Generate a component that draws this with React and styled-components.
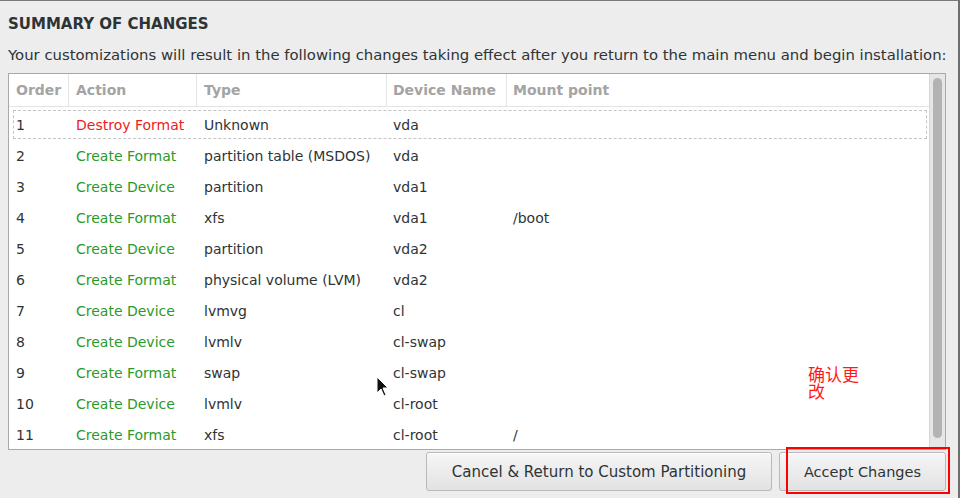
import styled, { createGlobalStyle } from "styled-components";

const Global = createGlobalStyle`
  html, body { margin: 0; padding: 0; background: #ededed; }
  body { font-family: "DejaVu Sans", "Noto Sans CJK SC", sans-serif; color: #2e3436; }
`;

const Window = styled.div`
  position: relative;
  width: 960px;
  height: 498px;
  box-sizing: border-box;
  background: #ededed;
  border-top: 1px solid #7a7a7a;
  border-right: 2px solid #6e6e6e;
  padding: 0 12px 0 8px;
  display: flex;
  flex-direction: column;
  overflow: hidden;
`;

const Title = styled.h1`
  margin: 14px 0 0 0;
  font-size: 15px;
  font-weight: bold;
  line-height: 18px;
`;

const Intro = styled.p`
  margin: 13px 0 0 0;
  font-size: 14.85px;
  line-height: 18px;
  white-space: nowrap;
`;

const Frame = styled.div`
  margin-top: 9px;
  width: 938px;
  height: 377px;
  flex-shrink: 0;
  box-sizing: border-box;
  border: 1px solid #a9a9a9;
  background: #fff;
  display: flex;
  overflow: hidden;
`;

const Table = styled.div`
  flex: 1;
  display: grid;
  grid-template-columns: 60px 128px 190px 120px 1fr;
  grid-template-rows: 35px;
  grid-auto-rows: 31px;
  align-content: start;
`;

const HeadCell = styled.div`
  height: 33px;
  box-sizing: border-box;
  padding-left: ${p => p.$pad}px;
  border-right: ${p => (p.$last ? "none" : "1px solid #e4e4e4")};
  border-bottom: 1px solid #e4e4e4;
  display: flex;
  align-items: center;
  font-size: 14px;
  font-weight: bold;
  color: #a4a4a4;
`;

const Row = styled.div`
  position: relative;
  grid-column: 1 / -1;
  display: grid;
  grid-template-columns: subgrid;

  &::before {
    content: "";
    display: ${p => (p.$focus ? "block" : "none")};
    position: absolute;
    left: 4px;
    right: 2px;
    top: 1px;
    height: 27px;
    border: 1px dashed #c4c4c4;
  }
`;

const Cell = styled.div`
  padding-left: ${p => p.$pad}px;
  display: flex;
  align-items: center;
  font-size: 14px;
  white-space: nowrap;
  color: ${p => p.$color || "#2e3436"};
`;

const Trough = styled.div`
  width: 16px;
  background: #e6e6e6;
  border-left: 1px solid #d6d6d6;
  padding: 4px 3px 11px 3px;
  box-sizing: border-box;
  display: flex;
`;

const Thumb = styled.div`
  flex: 1;
  background: #b3b3b3;
  border-radius: 5px;
`;

const Footer = styled.div`
  display: flex;
  justify-content: flex-end;
  gap: 7px;
  margin-top: 2px;
`;

const Button = styled.button`
  height: 39px;
  width: ${p => p.$w}px;
  border: 1px solid #b9b9b9;
  border-radius: 3px;
  background: linear-gradient(#f6f6f6, #e2e2e2);
  font-family: "DejaVu Sans", sans-serif;
  font-size: ${p => p.$fs}px;
  color: #2e3436;
  box-shadow: inset 0 1px 0 #fff;
`;

const Mark = styled.div`
  position: absolute;
  left: 786px;
  top: 446px;
  width: 164px;
  height: 47px;
  box-sizing: border-box;
  border: 2px solid #ff0000;
`;

const Note = styled.div`
  position: absolute;
  left: 808px;
  top: 364px;
  width: 56px;
  font-family: "Noto Sans CJK SC", sans-serif;
  font-size: 17px;
  line-height: 17px;
  color: #ff1a1a;
`;

const Pointer = styled.svg`
  position: absolute;
  left: 376px;
  top: 375px;
`;

const GREEN = "#2a9a2a";
const RED = "#ee1c1c";

const rows = [
  ["1", "Destroy Format", "Unknown", "vda", ""],
  ["2", "Create Format", "partition table (MSDOS)", "vda", ""],
  ["3", "Create Device", "partition", "vda1", ""],
  ["4", "Create Format", "xfs", "vda1", "/boot"],
  ["5", "Create Device", "partition", "vda2", ""],
  ["6", "Create Format", "physical volume (LVM)", "vda2", ""],
  ["7", "Create Device", "lvmvg", "cl", ""],
  ["8", "Create Device", "lvmlv", "cl-swap", ""],
  ["9", "Create Format", "swap", "cl-swap", ""],
  ["10", "Create Device", "lvmlv", "cl-root", ""],
  ["11", "Create Format", "xfs", "cl-root", "/"],
];

const heads = ["Order", "Action", "Type", "Device Name", "Mount point"];
const pads = [7, 7, 7, 6, 6];

export default function App() {
  return (
    <Window>
      <Global />
      <Title>SUMMARY OF CHANGES</Title>
      <Intro>
        Your customizations will result in the following changes taking effect after you return to the main menu and begin installation:
      </Intro>
      <Frame>
        <Table>
          {heads.map((h, i) => (
            <HeadCell key={h} $pad={pads[i]} $last={i === heads.length - 1}>
              {h}
            </HeadCell>
          ))}
          {rows.map((r, i) => (
            <Row key={r[0]} $focus={i === 0}>
              {r.map((c, j) => (
                <Cell key={j} $pad={pads[j]} $color={j === 1 ? (i === 0 ? RED : GREEN) : undefined}>
                  {c}
                </Cell>
              ))}
            </Row>
          ))}
        </Table>
        <Trough>
          <Thumb />
        </Trough>
      </Frame>
      <Footer>
        <Button $w={346} $fs={15}>Cancel &amp; Return to Custom Partitioning</Button>
        <Button $w={167} $fs={14.5}>Accept Changes</Button>
      </Footer>
      <Mark />
      <Note>确认更改</Note>
      <Pointer width="14" height="22" viewBox="0 0 14 22">
        <path d="M1 1 L1 17 L5 13 L8 20 L10 19 L7 12 L12 12 Z" fill="#111" stroke="#fff" strokeWidth="1" />
      </Pointer>
    </Window>
  );
}
